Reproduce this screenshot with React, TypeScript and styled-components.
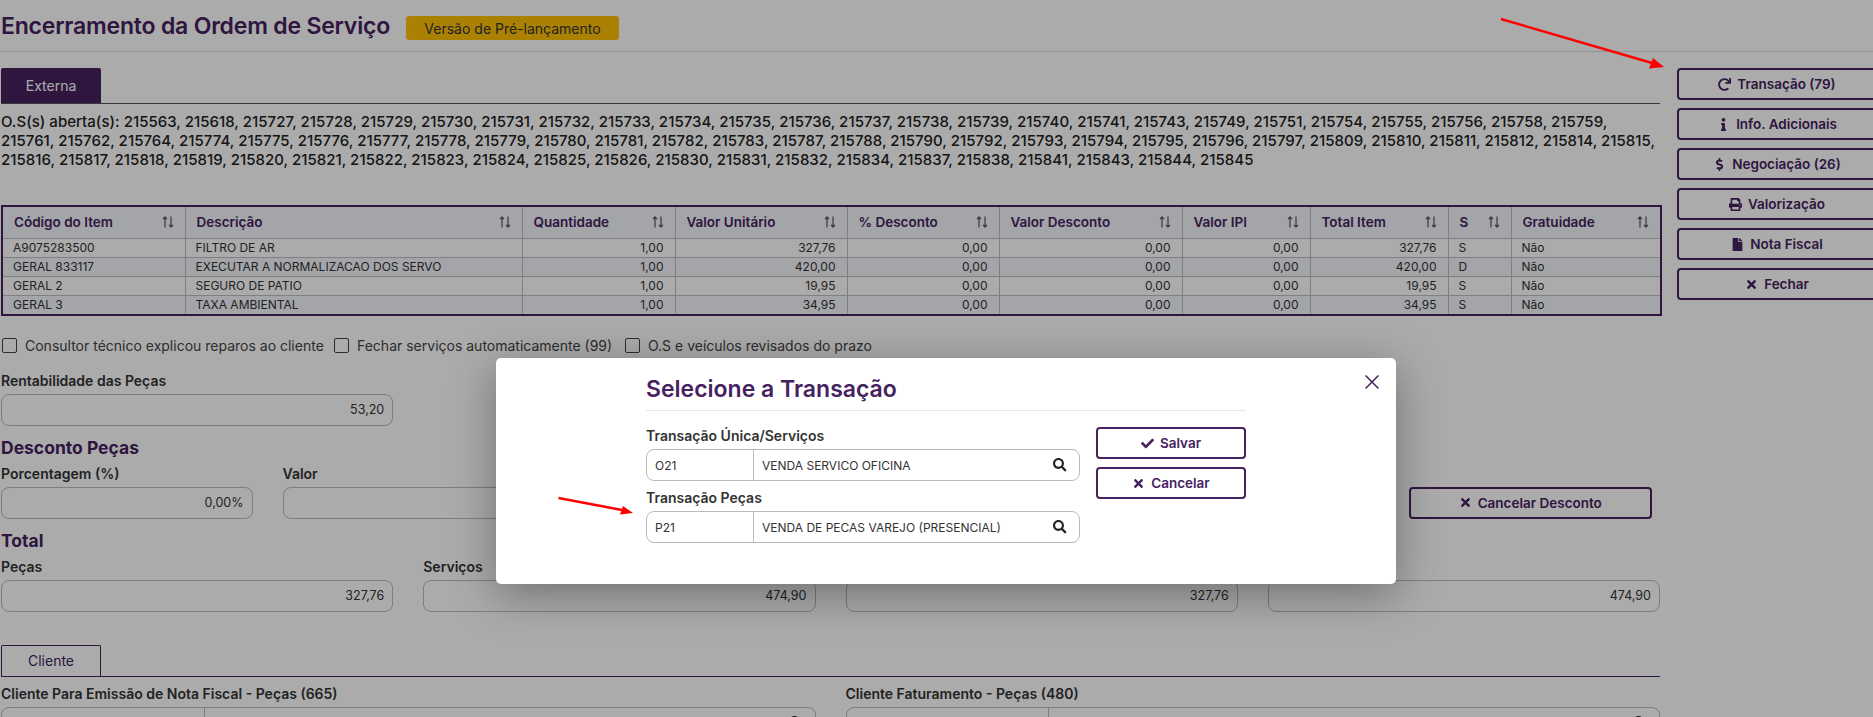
import React from "react";
import styled, { createGlobalStyle } from "styled-components";
import { FaRedo, FaInfo, FaDollarSign, FaPrint, FaFile, FaTimes, FaCheck, FaSearch } from "react-icons/fa";

const FONT = `"Inter", "Noto Sans", sans-serif`;
const PURPLE = "#45225f";

const Global = createGlobalStyle`
  html, body { margin: 0; padding: 0; background: #fff; overflow: hidden; }
  #root { width: 1873px; height: 717px; overflow: hidden; position: relative; }
  * { box-sizing: border-box; }
  body { font-family: ${FONT}; color: #333; }
`;

const Page = styled.div`width: 1877px; height: 717px; overflow: hidden;`;
const Header = styled.header`
  height: 52px; padding-left: 1px; border-bottom: 1px solid #ddd;
  display: flex; align-items: center; gap: 16px;
`;
const Title = styled.h1`margin: 0; font-size: 23px; font-weight: 600; color: ${PURPLE}; line-height: 30px; letter-spacing: -0.2px;`;
const Badge = styled.span`
  height: 24px; width: 213px; margin-top: 6px; display: flex; align-items: center; justify-content: center;
  background: #ffc107; border-radius: 3px; font-size: 14px; color: #333; margin-top: 5px;
`;
const Body = styled.div`display: flex; gap: 17px; padding: 16px 0 0 1px;`;
const Main = styled.main`width: 1659px; flex: none;`;
const Side = styled.aside`width: 200px; flex: none; display: flex; flex-direction: column; gap: 8px;`;
const TabStrip = styled.div<{ $color: string }>`display: flex; border-bottom: 1px solid ${p => p.$color};`;
const Tab = styled.div<{ $active?: boolean }>`
  width: 100px; display: flex; align-items: center; justify-content: center; font-size: 14px;
  height: ${p => (p.$active ? "35px" : "31px")};
  background: ${p => (p.$active ? PURPLE : "transparent")};
  color: ${p => (p.$active ? "#fff" : PURPLE)};
  border-radius: 2px 2px 0 0;
  ${p => (p.$active ? "" : `border: 1px solid ${PURPLE}; border-bottom: 0;`)}
`;
const OsText = styled.p`margin: 8px 0 16px; font-size: 15px; line-height: 19.2px; font-weight: 500; color: #222; height: 77px; letter-spacing: 0.02px;`;
const Table = styled.table`
  width: 1659px; border-collapse: collapse; table-layout: fixed; border: 2px solid ${PURPLE};
`;
const Th = styled.th`
  height: 32px; padding: 0 11px; text-align: left; font-size: 13.5px; font-weight: 600; color: ${PURPLE};
  background: #f3f6fc; border-right: 1px solid #bfbfbf; border-bottom: 1px solid #bfbfbf;
  &:last-child { border-right: 0; }
`;
const ThInner = styled.div`display: flex; align-items: center; justify-content: space-between; white-space: nowrap;`;
const Tr = styled.tr<{ $alt: boolean }>`background: ${p => (p.$alt ? "#f3f6fc" : "transparent")};`;
const Td = styled.td<{ $num?: boolean }>`
  height: 19px; padding: 0 11px 0 10px; font-size: 12px; line-height: 18px; color: #333; white-space: nowrap;
  text-align: ${p => (p.$num ? "right" : "left")};
  border-right: 1px solid #bfbfbf; border-bottom: 1px solid #bfbfbf;
  &:last-child { border-right: 0; }
`;
const Checks = styled.div`display: flex; margin-top: 22px; height: 16px; align-items: center; font-size: 14px;`;
const Check = styled.label<{ $w: number }>`display: flex; align-items: center; gap: 8px; width: ${p => p.$w}px; white-space: nowrap; color: #444;`;
const Box = styled.span`width: 15px; height: 15px; border: 1.5px solid #444; border-radius: 2px; flex: none; margin-left: 1px;`;
const Grid = styled.div<{ $cols: number }>`display: grid; grid-template-columns: repeat(${p => p.$cols}, 1fr); column-gap: 30px;`;
const Field = styled.div<{ $col?: number }>`${p => (p.$col ? `grid-column: ${p.$col};` : "")}`;
const Label = styled.div`height: 20px; line-height: 20px; margin-bottom: 3px; font-size: 14px; font-weight: 600; color: #333; white-space: nowrap;`;
const ValueBox = styled.div`
  height: 32px; border: 1px solid #bbb; border-radius: 8px; padding: 0 8px;
  display: flex; align-items: center; justify-content: flex-end; font-size: 12.5px; color: #333;
`;
const Section = styled.div`margin-top: 17px;`;
const Heading = styled.h3`margin: 10px 0 4px; font-size: 17.5px; line-height: 24px; font-weight: 700; color: ${PURPLE};`;
const Btn = styled.button<{ $mr?: number; $h?: number }>`
  height: 32px; width: ${p => (p.$mr ? `calc(100% - ${p.$mr}px)` : "100%")}; flex: none;
  background: transparent; border: 2px solid ${PURPLE}; border-radius: 4px;
  display: flex; align-items: center; justify-content: center; gap: 6px;
  font-family: ${FONT}; font-size: 13.5px; font-weight: 600; color: ${PURPLE}; padding: 0;
  svg { font-size: 13px; flex: none; }
`;
const ActionCell = styled.div`grid-column: 6; align-self: end;`;
const TabWrap = styled.div`margin-top: 33px;`;
const ClientRow = styled.div`display: grid; grid-template-columns: repeat(2, 1fr); gap: 30px; margin-top: 7px;`;
const Lookup = styled.div`
  height: 32px; border: 1px solid #bbb; border-radius: 8px; display: flex; align-items: stretch; font-size: 12px; color: #333;
`;
const LookupCode = styled.div<{ $w: number }>`width: ${p => p.$w}px; flex: none; border-right: 1px solid #bbb; padding-left: 8px; display: flex; align-items: center;`;
const LookupText = styled.div`flex: 1; padding-left: 8px; display: flex; align-items: center;`;
const LookupIcon = styled.div`width: 26px; display: flex; align-items: center; font-size: 13.5px; color: #222;`;

const Overlay = styled.div`position: absolute; inset: 0; background: rgba(0,0,0,.33); padding: 358px 0 0 496px;`;
const Modal = styled.div`
  position: relative; width: 900px; height: 226px; background: #fff; border-radius: 5px;
  padding: 18px 0 0 150px; box-shadow: 0 10px 45px rgba(0,0,0,.35);
`;
const ModalInner = styled.div`width: 600px;`;
const ModalTitle = styled.h2`margin: 0; font-size: 23px; line-height: 26px; font-weight: 600; color: ${PURPLE}; padding-bottom: 8px; border-bottom: 1px solid #e6e6e6;`;
const ModalBody = styled.div`display: flex; gap: 16px; padding-top: 15px;`;
const ModalForm = styled.div`width: 434px; flex: none;`;
const ModalField = styled.div`margin-bottom: 7px;`;
const ModalActions = styled.div`flex: 1; display: flex; flex-direction: column; gap: 8px; padding-top: 1px;`;
const Close = styled.button`
  position: absolute; top: 17px; right: 17px; width: 14px; height: 14px; padding: 0; border: 0; background: none; color: ${PURPLE};
`;
const Annot = styled.svg`position: absolute; left: 0; top: 0; width: 1873px; height: 717px; pointer-events: none;`;

const Sort = () => (
  <svg width="12" height="12" viewBox="0 0 12 12" fill="none" stroke="#55555f" strokeWidth="1.2" style={{ flex: "none" }}>
    <path d="M3 11.5V1M1 3.2 3 1l2 2.2M9 .5V11M7 8.8 9 11l2-2.2" />
  </svg>
);

const ids = "215563, 215618, 215727, 215728, 215729, 215730, 215731, 215732, 215733, 215734, 215735, 215736, 215737, 215738, 215739, 215740, 215741, 215743, 215749, 215751, 215754, 215755, 215756, 215758, 215759, 215761, 215762, 215764, 215774, 215775, 215776, 215777, 215778, 215779, 215780, 215781, 215782, 215783, 215787, 215788, 215790, 215792, 215793, 215794, 215795, 215796, 215797, 215809, 215810, 215811, 215812, 215814, 215815, 215816, 215817, 215818, 215819, 215820, 215821, 215822, 215823, 215824, 215825, 215826, 215830, 215831, 215832, 215834, 215837, 215838, 215841, 215843, 215844, 215845";

const cols: [string, number][] = [
  ["Código do Item", 183], ["Descrição", 337], ["Quantidade", 153], ["Valor Unitário", 172], ["% Desconto", 152],
  ["Valor Desconto", 183], ["Valor IPI", 128], ["Total Item", 138], ["S", 63], ["Gratuidade", 150],
];
const rows = [
  ["A9075283500", "FILTRO DE AR", "1,00", "327,76", "0,00", "0,00", "0,00", "327,76", "S", "Não"],
  ["GERAL 833117", "EXECUTAR A NORMALIZACAO DOS SERVO", "1,00", "420,00", "0,00", "0,00", "0,00", "420,00", "D", "Não"],
  ["GERAL 2", "SEGURO DE PATIO", "1,00", "19,95", "0,00", "0,00", "0,00", "19,95", "S", "Não"],
  ["GERAL 3", "TAXA AMBIENTAL", "1,00", "34,95", "0,00", "0,00", "0,00", "34,95", "S", "Não"],
];
const side = [
  [<FaRedo key="a" />, "Transação (79)"], [<FaInfo key="b" />, "Info. Adicionais"], [<FaDollarSign key="c" />, "Negociação (26)"],
  [<FaPrint key="d" />, "Valorização"], [<FaFile key="e" />, "Nota Fiscal"], [<FaTimes key="f" />, "Fechar"],
] as const;

export default function App() {
  return (
    <>
      <Global />
      <Page>
        <Header>
          <Title>Encerramento da Ordem de Serviço</Title>
          <Badge>Versão de Pré-lançamento</Badge>
        </Header>
        <Body>
          <Main>
            <TabStrip $color="#555"><Tab $active>Externa</Tab></TabStrip>
            <OsText>O.S(s) aberta(s): {ids}</OsText>
            <Table>
              <colgroup>{cols.map(c => <col key={c[0]} style={{ width: c[1] }} />)}</colgroup>
              <thead>
                <tr>{cols.map(c => <Th key={c[0]}><ThInner>{c[0]}<Sort /></ThInner></Th>)}</tr>
              </thead>
              <tbody>
                {rows.map((r, i) => (
                  <Tr key={i} $alt={i % 2 === 1}>
                    {r.map((v, j) => <Td key={j} $num={j >= 2 && j <= 7}>{v}</Td>)}
                  </Tr>
                ))}
              </tbody>
            </Table>
            <Checks>
              <Check $w={332}><Box />Consultor técnico explicou reparos ao cliente</Check>
              <Check $w={291}><Box />Fechar serviços automaticamente (99)</Check>
              <Check $w={300}><Box />O.S e veículos revisados do prazo</Check>
            </Checks>
            <Section>
              <Grid $cols={4}>
                <Field><Label>Rentabilidade das Peças</Label><ValueBox>53,20</ValueBox></Field>
              </Grid>
            </Section>
            <Heading>Desconto Peças</Heading>
            <Grid $cols={6}>
              <Field><Label>Porcentagem (%)</Label><ValueBox>0,00%</ValueBox></Field>
              <Field $col={2}><Label>Valor</Label><ValueBox /></Field>
              <ActionCell><Btn $mr={8}><FaTimes />Cancelar Desconto</Btn></ActionCell>
            </Grid>
            <Heading>Total</Heading>
            <Grid $cols={4}>
              <Field><Label>Peças</Label><ValueBox>327,76</ValueBox></Field>
              <Field><Label>Serviços</Label><ValueBox>474,90</ValueBox></Field>
              <Field><Label>&nbsp;</Label><ValueBox>327,76</ValueBox></Field>
              <Field><Label>&nbsp;</Label><ValueBox>474,90</ValueBox></Field>
            </Grid>
            <TabWrap>
              <TabStrip $color={PURPLE}><Tab>Cliente</Tab></TabStrip>
            </TabWrap>
            <ClientRow>
              <Field>
                <Label>Cliente Para Emissão de Nota Fiscal - Peças (665)</Label>
                <Lookup><LookupCode $w={203} /><LookupText /><LookupIcon><FaSearch /></LookupIcon></Lookup>
              </Field>
              <Field>
                <Label>Cliente Faturamento - Peças (480)</Label>
                <Lookup><LookupCode $w={202} /><LookupText /><LookupIcon><FaSearch /></LookupIcon></Lookup>
              </Field>
            </ClientRow>
          </Main>
          <Side>
            {side.map(s => <Btn key={s[1]}>{s[0]}{s[1]}</Btn>)}
          </Side>
        </Body>
      </Page>
      <Overlay>
        <Modal>
          <Close aria-label="Fechar">
            <svg width="14" height="14" viewBox="0 0 14 14" stroke="currentColor" strokeWidth="1.5" fill="none"><path d="M.5.5l13 13M13.5.5l-13 13" /></svg>
          </Close>
          <ModalInner>
            <ModalTitle>Selecione a Transação</ModalTitle>
            <ModalBody>
              <ModalForm>
                <ModalField>
                  <Label>Transação Única/Serviços</Label>
                  <Lookup><LookupCode $w={107}>O21</LookupCode><LookupText>VENDA SERVICO OFICINA</LookupText><LookupIcon><FaSearch /></LookupIcon></Lookup>
                </ModalField>
                <ModalField>
                  <Label>Transação Peças</Label>
                  <Lookup><LookupCode $w={107}>P21</LookupCode><LookupText>VENDA DE PECAS VAREJO (PRESENCIAL)</LookupText><LookupIcon><FaSearch /></LookupIcon></Lookup>
                </ModalField>
              </ModalForm>
              <ModalActions>
                <Btn><FaCheck />Salvar</Btn>
                <Btn><FaTimes />Cancelar</Btn>
              </ModalActions>
            </ModalBody>
          </ModalInner>
        </Modal>
      </Overlay>
      <Annot viewBox="0 0 1873 717">
        <path d="M1501 19 L1652 63" stroke="#f00" strokeWidth="2.5" fill="none" />
        <path d="M1664 67 L1649 68.5 L1653 58 Z" fill="#f00" />
        <path d="M558.5 498 L622 510" stroke="#f00" strokeWidth="2.5" fill="none" />
        <path d="M633 513 L620 514.5 L623 506 Z" fill="#f00" />
      </Annot>
    </>
  );
}
